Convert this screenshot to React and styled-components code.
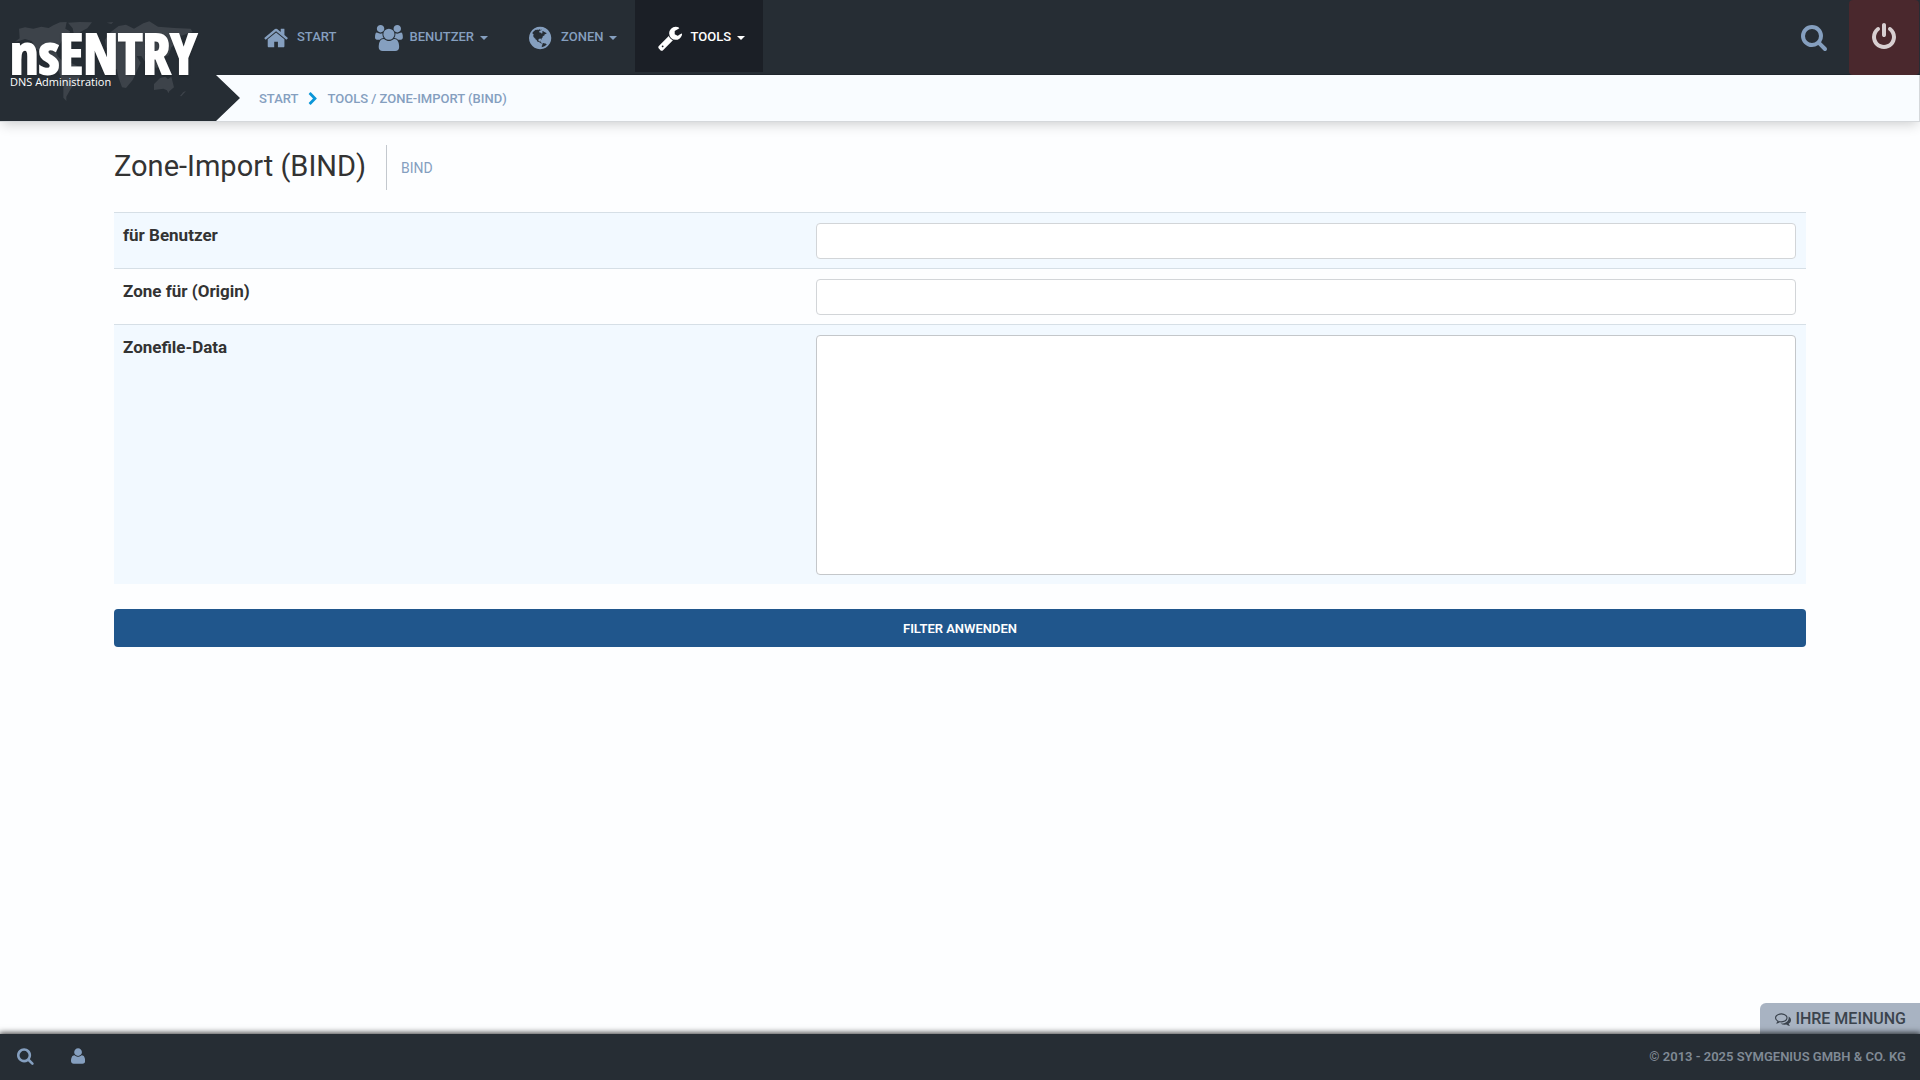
import styled, { createGlobalStyle, css } from "styled-components";

const GlobalStyle = createGlobalStyle`
  * { box-sizing: border-box; }
  body {
    margin: 0;
    background: #fdfeff;
    color: #333;
    font-family: Roboto, "Liberation Sans", sans-serif;
    font-size: 16px;
    line-height: 24px;
  }
  a { color: inherit; text-decoration: none; }
  button { font-family: inherit; cursor: pointer; }
`;

const dark = "#262d34";
const steel = "#859fbf";

// glyphs live in a 1792 unit em with the baseline 1536 below the top
const glyphs = {
  home: [1664, "M1408 544v-480q0 -26 -19 -45t-45 -19h-384v384h-256v-384h-384q-26 0 -45 19t-19 45v480q0 1 .5 3t.5 3l575 474l575 -474q1 -2 1 -6zM1631 613l-62 -74q-8 -9 -21 -11h-3q-13 0 -21 7l-692 577l-692 -577q-12 -8 -24 -7q-13 2 -21 11l-62 74q-8 10 -7 23.5t11 21.5l719 599q32 26 76 26t76 -26l244 -204v195q0 14 9 23t23 9h192q14 0 23 -9t9 -23v-408l219 -182q10 -8 11 -21.5t-7 -23.5z"],
  users: [1920, "M593 640q-162 -5 -265 -128h-134q-82 0 -138 40.5t-56 118.5q0 353 124 353q6 0 43.5 -21t97.5 -42.5t119 -21.5q67 0 133 23q-5 -37 -5 -66q0 -139 81 -256zM1664 3q0 -120 -73 -189.5t-194 -69.5h-874q-121 0 -194 69.5t-73 189.5q0 53 3.5 103.5t14 109t26.5 108.5t43 97.5t62 81t85.5 53.5t111.5 20q10 0 43 -21.5t73 -48t107 -48t135 -21.5t135 21.5t107 48t73 48t43 21.5q61 0 111.5 -20t85.5 -53.5t62 -81t43 -97.5t26.5 -108.5t14 -109t3.5 -103.5zM640 1280q0 -106 -75 -181t-181 -75t-181 75t-75 181t75 181t181 75t181 -75t75 -181zM1344 896q0 -159 -112.5 -271.5t-271.5 -112.5t-271.5 112.5t-112.5 271.5t112.5 271.5t271.5 112.5t271.5 -112.5t112.5 -271.5zM1920 671q0 -78 -56 -118.5t-138 -40.5h-134q-103 123 -265 128q81 117 81 256q0 29 -5 66q66 -23 133 -23q59 0 119 21.5t97.5 42.5t43.5 21q124 0 124 -353zM1792 1280q0 -106 -75 -181t-181 -75t-181 75t-75 181t75 181t181 75t181 -75t75 -181z"],
  wrench: [1664, "M384 64q0 26 -19 45t-45 19t-45 -19t-19 -45t19 -45t45 -19t45 19t19 45zM1028 484l-682 -682q-37 -37 -90 -37q-52 0 -91 37l-106 108q-38 36 -38 90q0 53 38 91l681 681q39 -98 114.5 -173.5t173.5 -114.5zM1662 919q0 -39 -23 -106q-47 -134 -164.5 -217.5t-258.5 -83.5q-185 0 -316.5 131.5t-131.5 316.5t131.5 316.5t316.5 131.5q58 0 121.5 -16.5t107.5 -46.5q16 -11 16 -28t-16 -28l-293 -169v-224l193 -107q5 3 79 48.5t135.5 81t70.5 35.5q15 0 23.5 -10t8.5 -25z"],
  search: [1664, "M1152 704q0 185 -131.5 316.5t-316.5 131.5t-316.5 -131.5t-131.5 -316.5t131.5 -316.5t316.5 -131.5t316.5 131.5t131.5 316.5zM1664 -128q0 -52 -38 -90t-90 -38q-54 0 -90 38l-343 342q-179 -124 -399 -124q-143 0 -273.5 55.5t-225 150t-150 225t-55.5 273.5t55.5 273.5t150 225t225 150t273.5 55.5t273.5 -55.5t225 -150t150 -225t55.5 -273.5q0 -220 -124 -399l343 -343q37 -37 37 -90z"],
  power: [1536, "M1536 640q0 -156 -61 -298t-164 -245t-245 -164t-298 -61t-298 61t-245 164t-164 245t-61 298q0 182 80.5 343t226.5 270q43 32 95.5 25t83.5 -50q32 -42 24.5 -94.5t-49.5 -84.5q-98 -74 -151.5 -181t-53.5 -228q0 -104 40.5 -198.5t109.5 -163.5t163.5 -109.5t198.5 -40.5t198.5 40.5t163.5 109.5t109.5 163.5t40.5 198.5q0 121 -53.5 228t-151.5 181q-42 32 -49.5 84.5t24.5 94.5q31 43 84 50t95 -25q146 -109 226.5 -270t80.5 -343zM896 1408v-640q0 -52 -38 -90t-90 -38t-90 38t-38 90v640q0 52 38 90t90 38t90 -38t38 -90z"],
  user: [1408, "M1408 131q0 -120 -73 -189.5t-194 -69.5h-874q-121 0 -194 69.5t-73 189.5q0 53 3.5 103.5t14 109t26.5 108.5t43 97.5t62 81t85.5 53.5t111.5 20q10 0 43 -21.5t73 -48t107 -48t135 -21.5t135 21.5t107 48t73 48t43 21.5q61 0 111.5 -20t85.5 -53.5t62 -81t43 -97.5t26.5 -108.5t14 -109t3.5 -103.5zM1088 1024q0 -159 -112.5 -271.5t-271.5 -112.5t-271.5 112.5t-112.5 271.5t112.5 271.5t271.5 112.5t271.5 -112.5t112.5 -271.5z"],
  chevron: [1280, "M1107 659l-742 -742q-19 -19 -45 -19t-45 19l-166 166q-19 19 -19 45t19 45l531 531l-531 531q-19 19 -19 45t19 45l166 166q19 19 45 19t45 -19l742 -742q19 -19 19 -45t-19 -45z"],
  comments: [1792, "M704 1152q-153 0 -286 -52t-211.5 -141t-78.5 -191q0 -82 53 -158t149 -132l97 -56l-35 -84q34 20 62 39l44 31l53 -10q78 -14 153 -14q153 0 286 52t211.5 141t78.5 191t-78.5 191t-211.5 141t-286 52zM704 1280q191 0 353.5 -68.5t256.5 -186.5t94 -257t-94 -257t-256.5 -186.5t-353.5 -68.5q-86 0 -176 16q-124 -88 -278 -128q-36 -9 -86 -16h-3q-11 0 -20.5 8t-11.5 21q-1 3 -1 6.5t.5 6.5t2 6l2.5 5t3.5 5.5t4 5t4.5 5t4 4.5q5 6 23 25t26 29.5t22.5 29t25 38.5t20.5 44q-124 72 -195 177t-71 224q0 139 94 257t256.5 186.5t353.5 68.5zM1526 111q10 -24 20.5 -44t25 -38.5t22.5 -29t26 -29.5t23 -25q1 -1 4 -4.5t4.5 -5t4 -5t3.5 -5.5l2.5 -5t2 -6t.5 -6.5t-1 -6.5q-3 -14 -13 -22t-22 -7q-50 7 -86 16q-154 40 -278 128q-90 -16 -176 -16q-271 0 -472 132q58 -4 88 -4q161 0 309 45t264 129q125 92 192 212t67 254q0 77 -23 152q129 -71 204 -178t75 -230q0 -120 -71 -224.5t-195 -176.5z"],
};

const globePath =
  "M896 128q209 0 385.5 103t279.5 279.5 103 385.5-103 385.5-279.5 279.5-385.5 103-385.5-103-279.5-279.5-103-385.5 103-385.5 279.5-279.5 385.5-103zm274 521q-2 1-9.5 9.5t-13.5 9.5q2 0 4.5-5t5-11 3.5-7q6-7 22-15 14-6 52-12 34-8 51 11-2-2 9.5-13t14.5-12q3-2 15-4.5t15-7.5l2-22q-12 1-17.5-7t-6.5-21q0 2-6 8 0-7-4.5-8t-11.5 1-9 1q-10-3-15-7.5t-8-16.5-4-15q-2-5-9.5-11t-9.5-10q-1-2-2.5-5.5t-3-6.5-4-5.5-5.5-2.5-7 5-7.5 10-4.5 5q-3-2-6-1.5t-4.5 1-4.5 3-5 3.5q-3 2-8.5 3t-8.5 2q15-5-1-11-10-4-16-3 9-4 7.5-12t-8.5-14h5q-1-4-8.5-8.5t-17.5-8.5-13-6q-8-5-34-9.5t-33-.5q-5 6-4.5 10.5t4 14 3.5 12.5q1 6-5.5 13t-6.5 12q0 7 14 15.5t10 21.5q-3 8-16 16t-16 12q-5 8-1.5 18.5t10.5 16.5q2 2 1.5 4t-3.5 4.5-5.5 4-6.5 3.5l-3 2q-11 5-20.5-6t-13.5-26q-7-25-16-30-23-8-29 1-5-13-41-26-25-9-58-4 6-1 0-15-7-15-19-12 3-6 4-17.5t1-13.5q3-13 12-23 1-1 7-8.5t9.5-13.5.5-6q35 4 50-11 5-5 11.5-17t10.5-17q9-6 14-5.5t14.5 5.5 14.5 5q14 1 15.5-11t-7.5-20q12 1 3-17-4-7-8-9-12-4-27 5-8 4 2 8-1-1-9.5 10.5t-16.5 17.5-16-5q-1-1-5.5-13.5t-9.5-13.5q-8 0-16 15 3-8-11-15t-24-8q19-12-8-27-7-4-20.5-5t-19.5 4q-5 7-5.5 11.5t5 8 10.5 5.5 11.5 4 8.5 3q14 10 8 14-2 1-8.5 3.5t-11.5 4.5-6 4q-3 4 0 14t-2 14q-5-5-9-17.5t-7-16.5q7 9-25 6l-10-1q-4 0-16 2t-20.5 1-13.5-8q-4-8 0-20 1-4 4-2-4-3-11-9.5t-10-8.5q-46 15-94 41 6 1 12-1 5-2 13-6.5t10-5.5q34-14 42-7l5-5q14 16 20 25-7-4-30-1-20 6-22 12 7 12 5 18-4-3-11.5-10t-14.5-11-15-5q-16 0-22 1-146 80-235 222 7 7 12 8 4 1 5 9t2.5 11 11.5-3q9 8 3 19 1-1 44 27 19 17 21 21 3 11-10 18-1-2-9-9t-9-4q-3 5 .5 18.5t10.5 12.5q-7 0-9.5 16t-2.5 35.5-1 23.5l2 1q-3 12 5.5 34.5t21.5 19.5q-13 3 20 43 6 8 8 9 3 2 12 7.5t15 10 10 10.5q4 5 10 22.5t14 23.5q-2 6 9.5 20t10.5 23q-1 0-2.5 1t-2.5 1q3 7 15.5 14t15.5 13q1 3 2 10t3 11 8 2q2-20-24-62-15-25-17-29-3-5-5.5-15.5t-4.5-14.5q2 0 6 1.5t8.5 3.5 7.5 4 2 3q-3 7 2 17.5t12 18.5 17 19 12 13q6 6 14 19.5t0 13.5q9 0 20 10.5t17 19.5q5 8 8 26t5 24q2 7 8.5 13.5t12.5 9.5l16 8 13 7q5 2 18.5 10.5t21.5 11.5q10 4 16 4t14.5-2.5 13.5-3.5q15-2 29 15t21 21q36 19 55 11-2 1 .5 7.5t8 15.5 9 14.5 5.5 8.5q5 6 18 15t18 15q6-4 7-9-3 8 7 20t18 10q14-3 14-32-31 15-49-18 0-1-2.5-5.5t-4-8.5-2.5-8.5 0-7.5 5-3q9 0 10-3.5t-2-12.5-4-13q-1-8-11-20t-12-15q-5 9-16 8t-16-9q0 1-1.5 5.5t-1.5 6.5q-13 0-15-1 1-3 2.5-17.5t3.5-22.5q1-4 5.5-12t7.5-14.5 4-12.5-4.5-9.5-17.5-2.5q-19 1-26 20-1 3-3 10.5t-5 11.5-9 7q-7 3-24 2t-24-5q-13-8-22.5-29t-9.5-37q0-10 2.5-26.5t3-25-5.5-24.5q3-2 9-9.5t10-10.5q2-1 4.5-1.5t4.5 0 4-1.5 3-6q-1-1-4-3-3-3-4-3 7 3 28.5-1.5t27.5 1.5q15 11 22-2 0-1-2.5-9.5t-.5-13.5q5 27 29 9 3 3 15.5 5t17.5 5q3 2 7 5.5t5.5 4.5 5-.5 8.5-6.5q10 14 12 24 11 40 19 44 7 3 11 2t4.5-9.5 0-14-1.5-12.5l-1-8v-18l-1-8q-15-3-18.5-12t1.5-18.5 15-18.5q1-1 8-3.5t15.5-6.5 12.5-8q21-19 15-35 7 0 11-9-1 0-5-3t-7.5-5-4.5-2q9-5 2-16 5-3 7.5-11t7.5-10q9 12 21 2 8-8 1-16 5-7 20.5-10.5t18.5-9.5q7 2 8-2t1-12 3-12q4-5 15-9t13-5l17-11q3-4 0-4 18 2 31-11 10-11-6-20 3-6-3-9.5t-15-5.5q3-1 11.5-.5t10.5-1.5q15-10-7-16-17-5-43 12zm-163 877q206-36 351-189-3-3-12.5-4.5t-12.5-3.5q-18-7-24-8 1-7-2.5-13t-8-9-12.5-8-11-7q-2-2-7-6t-7-5.5-7.5-4.5-8.5-2-10 1l-3 1q-3 1-5.5 2.5t-5.5 3-4 3 0 2.5q-21-17-36-22-5-1-11-5.5t-10.5-7-10-1.5-11.5 7q-5 5-6 15t-2 13q-7-5 0-17.5t2-18.5q-3-6-10.5-4.5t-12 4.5-11.5 8.5-9 6.5-8.5 5.5-8.5 7.5q-3 4-6 12t-5 11q-2-4-11.5-6.5t-9.5-5.5q2 10 4 35t5 38q7 31-12 48-27 25-29 40-4 22 12 26 0 7-8 20.5t-7 21.5q0 6 2 16z";

const Svg = styled.svg`
  display: block;
  flex: none;
  height: ${(props) => props.$size}px;
  fill: currentColor;
`;

function Icon({ name, size }) {
  if (name === "globe") {
    return (
      <Svg $size={size} viewBox="128 0 1536 1792" aria-hidden="true">
        <path d={globePath} />
      </Svg>
    );
  }
  const [width, d] = glyphs[name];
  return (
    <Svg $size={size} viewBox={`0 0 ${width} 1792`} aria-hidden="true">
      <path transform="translate(0 1536) scale(1 -1)" d={d} />
    </Svg>
  );
}

const Page = styled.div`
  display: flex;
  flex-direction: column;
  min-height: 100vh;
`;
const Top = styled.header`
  display: grid;
  grid-template-columns: 240px 1fr;
  grid-template-rows: 75px 46px;
  background: #f9fcff;
  border-bottom: 1px solid #d5d8db;
  box-shadow: 0 4px 12px -2px rgba(0, 0, 0, 0.2);
`;
const Logo = styled.a`
  grid-row: 1 / 3;
  display: grid;
  color: #fff;
  background: ${dark};
  clip-path: polygon(0 0, 100% 0, 100% 75px, 216px 75px, 100% 98px, 216px 100%, 0 100%);
`;
const WorldMap = styled.svg`
  grid-area: 1 / 1;
  width: 240px;
  height: 121px;
  fill: #3d434a;
`;
const Brand = styled.span`
  grid-area: 1 / 1;
  display: flex;
  flex-direction: column;
  padding: 28px 0 0 10px;
`;
const BrandName = styled.strong`
  font: 800 56px/48px "Open Sans Condensed", "Roboto Condensed", sans-serif;
  -webkit-text-stroke: 2px #fff;
  text-shadow: 0 1px 3px rgba(0, 0, 0, 0.5);
`;
const BrandLine = styled.span`
  font: 11px/12px "Open Sans", sans-serif;
`;

const Bar = styled.div`
  display: flex;
  justify-content: space-between;
  background: ${dark};
  border-bottom: 1px solid #1f252c;
`;
const Nav = styled.nav`
  display: flex;
  align-items: flex-start;
  padding-left: 2px;
`;
const NavItem = styled.a`
  display: flex;
  align-items: center;
  height: 72px;
  padding: 2px 18px 0;
  font-size: 13px;
  font-weight: 500;
  color: ${steel};
  ${(props) =>
    props.$active &&
    css`
      color: #fff;
      background: #1b1f26;
    `}
`;
const IconSlot = styled.span`
  display: flex;
  justify-content: center;
  width: 33px;
  margin-right: 4px;
  padding-top: 2px;
`;
const Caret = styled.span`
  margin: 2px 0 0 6px;
  border: 4px solid transparent;
  border-top-color: currentColor;
  border-bottom: 0;
`;
const Actions = styled.div`
  display: flex;
  padding-right: 1px;
`;
const ActionButton = styled.button`
  display: flex;
  align-items: center;
  justify-content: center;
  width: 70px;
  height: 75px;
  padding: 0 0 2px;
  border: 0;
  border-radius: 4px;
  color: ${(props) => (props.$danger ? "#d8cfd1" : steel)};
  background: ${(props) => (props.$danger ? "#4a282d" : "none")};
`;
const Crumbs = styled.nav`
  display: flex;
  align-items: center;
  padding: 2px 0 0 19px;
  border-right: 1px solid #d5d8db;
  font-size: 13px;
  font-weight: 500;
  color: ${steel};
`;
const CrumbArrow = styled.span`
  margin: 0 9px 0 10px;
  color: #0a96d8;
`;

const Main = styled.main`
  flex: 1;
  padding: 0 114px 24px;
`;
const Heading = styled.div`
  display: flex;
  align-items: flex-start;
  padding: 23px 0 22px;
`;
const Title = styled.h1`
  margin: 0;
  padding-right: 20px;
  font-size: 29px;
  font-weight: 400;
  line-height: 42px;
`;
const Subtitle = styled.span`
  height: 45px;
  padding: 0 14px;
  border-left: 1px solid #c3c8ce;
  font-size: 14px;
  line-height: 46px;
  color: ${steel};
`;
const FormTable = styled.table`
  width: 100%;
  border-collapse: separate;
  border-spacing: 0;
  tr:nth-child(odd) {
    background: #f2f9ff;
  }
  th,
  td {
    padding: 10px 10px 9px;
    border-top: 1px solid #d6dfe6;
    vertical-align: top;
  }
  th {
    width: 40.9%;
    padding-left: 9px;
    text-align: left;
    font-size: 17px;
    font-weight: 700;
  }
`;
const fieldStyle = css`
  display: block;
  width: 100%;
  padding: 6px 12px;
  border: 1px solid #d2d5d8;
  border-radius: 4px;
  background: #fff;
  font: 14px/20px Roboto, sans-serif;
`;
const TextField = styled.input`
  ${fieldStyle}
  height: 36px;
`;
const TextArea = styled.textarea`
  ${fieldStyle}
  height: 240px;
  border-color: #c4c7ca;
  resize: none;
`;
const Submit = styled.button`
  width: 100%;
  height: 38px;
  margin-top: 25px;
  border: 0;
  border-radius: 4px;
  background: #20568c;
  color: #fff;
  font-size: 13px;
  font-weight: 600;
`;

const Feedback = styled.button`
  display: flex;
  align-items: center;
  align-self: flex-end;
  gap: 4px;
  height: 31px;
  padding: 0 14px 0 15px;
  border: 0;
  border-radius: 6px 0 0 0;
  background: #a8b3c2;
  color: #3b434d;
  font-size: 16px;
  font-weight: 500;
`;
const Footer = styled.footer`
  position: relative;
  display: flex;
  align-items: center;
  justify-content: space-between;
  height: 46px;
  padding: 0 14px 0 17px;
  background: ${dark};
  box-shadow: 0 0 6px 1px rgba(0, 0, 0, 0.8);
  font-size: 13px;
  font-weight: 600;
  color: #808a95;
`;
const FooterIcons = styled.div`
  display: flex;
  gap: 37px;
  padding-bottom: 2px;
  color: ${steel};
`;
const FooterButton = styled.button`
  padding: 0;
  border: 0;
  background: none;
  color: inherit;
`;

const navItems = [
  { label: "START", icon: "home" },
  { label: "BENUTZER", icon: "users", menu: true },
  { label: "ZONEN", icon: "globe", menu: true },
  { label: "TOOLS", icon: "wrench", menu: true, active: true },
];

function NsLogo() {
  return (
    <Logo href="#">
      <WorldMap viewBox="0 0 720 363" aria-hidden="true">
        <path d="M57 86l18-4 25 4 24-6 22 4 14-8 20-9 20-1-4 20 14 8-5 16-16 7-12 20-8 18 4 14 12 12 8 10 22-1 30 14-4 26-18 20-14 22-10 18 0 13-9-10 0-42-13-34-6-14-20-12-14-32-28-12-14-24-20-6-18 6-12 2 14-10z" />
        <path d="M204 68l34-2 38 1-14 18-20 10-12 16-8-6-4-20z" />
        <path d="M318 142l-4-22 18-24 24-18 22-4 24 12 28-16 18-6 26 16 50 4 48 2 6 10-36 12-8 20-20 14-8 24-26 12-6 22-6 6-14-34-16 18-14-22-14 0 12 20-12 26-12 26-20 24-12-2-10-28-6-26-24-8-6-26 14-22z" />
        <path d="M462 252l18-18 16-4 8 8 10-8 8 32-14 12-18-8-28 4zM540 288l10-12 8-3-14 16zM364 246l6-14 2 8-7 16zM320 68l20-2-6 6zM500 270l8 2-2 8z" />
      </WorldMap>
      <Brand>
        <BrandName>nsENTRY</BrandName>
        <BrandLine>DNS Administration</BrandLine>
      </Brand>
    </Logo>
  );
}

export default function App() {
  return (
    <Page>
      <GlobalStyle />
      <Top>
        <NsLogo />
        <Bar>
          <Nav>
            {navItems.map((item) => (
              <NavItem key={item.label} href="#" $active={item.active}>
                <IconSlot>
                  <Icon name={item.icon} size={26} />
                </IconSlot>
                {item.label}
                {item.menu && <Caret />}
              </NavItem>
            ))}
          </Nav>
          <Actions>
            <ActionButton aria-label="Suche">
              <Icon name="search" size={28} />
            </ActionButton>
            <ActionButton $danger aria-label="Abmelden">
              <Icon name="power" size={28} />
            </ActionButton>
          </Actions>
        </Bar>
        <Crumbs>
          <a href="#">START</a>
          <CrumbArrow>
            <Icon name="chevron" size={14} />
          </CrumbArrow>
          <a href="#">TOOLS / ZONE-IMPORT (BIND)</a>
        </Crumbs>
      </Top>

      <Main>
        <Heading>
          <Title>Zone-Import (BIND)</Title>
          <Subtitle>BIND</Subtitle>
        </Heading>
        <form onSubmit={(e) => e.preventDefault()}>
          <FormTable>
            <tbody>
              <tr>
                <th scope="row"><label htmlFor="user">für Benutzer</label></th>
                <td><TextField id="user" type="text" /></td>
              </tr>
              <tr>
                <th scope="row"><label htmlFor="origin">Zone für (Origin)</label></th>
                <td><TextField id="origin" type="text" /></td>
              </tr>
              <tr>
                <th scope="row"><label htmlFor="zonefile">Zonefile-Data</label></th>
                <td><TextArea id="zonefile" /></td>
              </tr>
            </tbody>
          </FormTable>
          <Submit type="submit">FILTER ANWENDEN</Submit>
        </form>
      </Main>

      <Feedback type="button">
        <Icon name="comments" size={16} />
        IHRE MEINUNG
      </Feedback>
      <Footer>
        <FooterIcons>
          <FooterButton aria-label="Suche">
            <Icon name="search" size={18} />
          </FooterButton>
          <FooterButton aria-label="Profil">
            <Icon name="user" size={18} />
          </FooterButton>
        </FooterIcons>
        <span>© 2013 - 2025 SYMGENIUS GMBH &amp; CO. KG</span>
      </Footer>
    </Page>
  );
}
